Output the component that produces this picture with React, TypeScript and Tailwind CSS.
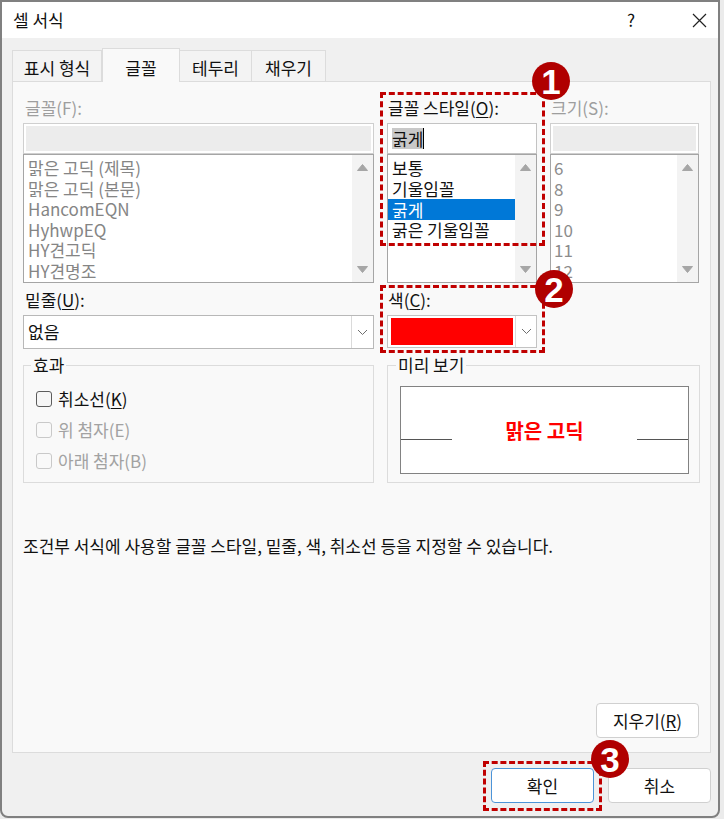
import React from "react";

const fontList = ["맑은 고딕 (제목)", "맑은 고딕 (본문)", "HancomEQN", "HyhwpEQ", "HY견고딕", "HY견명조"];
const styleList = ["보통", "기울임꼴", "굵게", "굵은 기울임꼴"];
const sizeList = ["6", "8", "9", "10", "11", "12"];

function ScrollBar() {
  return (
    <div className="w-[21px] shrink-0 bg-[#f3f3f3] flex flex-col items-center justify-between pt-[9px] pb-[9px]">
      <svg width="11" height="7" viewBox="0 0 11 7">
        <path d="M5.5 0.5L10.5 6.5H0.5z" fill="#a6a6a6" stroke="#a6a6a6" strokeLinejoin="round" />
      </svg>
      <svg width="11" height="7" viewBox="0 0 11 7">
        <path d="M0.5 0.5H10.5L5.5 6.5z" fill="#a6a6a6" stroke="#a6a6a6" strokeLinejoin="round" />
      </svg>
    </div>
  );
}

function Chevron() {
  return (
    <svg width="11" height="7" viewBox="0 0 11 7">
      <path d="M1 1l4.5 4.5L10 1" fill="none" stroke="#6e6e6e" strokeWidth="1" />
    </svg>
  );
}

function Badge({ n, className }: { n: string; className: string }) {
  return (
    <div
      className={
        "absolute w-[38px] h-[38px] rounded-full bg-[#b00000] text-white flex items-center justify-center font-['Liberation_Sans',sans-serif] font-bold text-[35px] leading-none z-30 " +
        className
      }
    >
      {n}
    </div>
  );
}

function CheckRow({ label, disabled }: { label: React.ReactNode; disabled?: boolean }) {
  return (
    <div className="h-[31px] flex items-center gap-[6px]">
      <div
        className={
          disabled
            ? "w-[16px] h-[16px] rounded-[3px] border border-[#c9c9c9] bg-[#f9f9f9]"
            : "w-[16px] h-[16px] rounded-[3px] border border-[#5c5c5c] bg-[#f6f6f6]"
        }
      />
      <span className={disabled ? "text-[#a2a2a2]" : "text-[#111]"}>{label}</span>
    </div>
  );
}

export default function App() {
  return (
    <div className="w-[724px] h-[819px] bg-[#ebebeb] font-['Noto_Sans_CJK_KR',sans-serif] text-[17px] leading-[20px] text-[#111]">
      <div className="relative w-[720px] h-[818px] border-2 border-[#808080] rounded-b-[8px] bg-[#f0f0f0] flex flex-col overflow-hidden">
        {/* title bar */}
        <div className="h-[36px] shrink-0 bg-white flex items-center pl-[11px]">
          <span>셀 서식</span>
          <span className="ml-auto w-[40px] text-center">?</span>
          <div className="ml-[29px] w-[38px] flex justify-center">
            <svg width="15" height="15" viewBox="0 0 15 15">
              <path d="M1 1l13 13M14 1L1 14" stroke="#222" strokeWidth="1.2" />
            </svg>
          </div>
        </div>

        {/* body */}
        <div className="flex-1 flex flex-col pl-[10px] pr-[7px] pt-[10px] pb-[13px]">
          {/* tabs */}
          <div className="flex h-[34px] items-end relative z-10">
            <div className="w-[90px] h-[31px] mb-px bg-[#f3f3f3] border border-b-0 border-[#dcdcdc] flex items-center justify-center pt-[3px]">
              표시 형식
            </div>
            <div className="w-[78px] h-[34px] bg-[#f9f9f9] border border-b-0 border-[#dcdcdc] flex items-center justify-center pt-[4px]">
              글꼴
            </div>
            <div className="w-[72px] h-[31px] mb-px bg-[#f3f3f3] border border-b-0 border-l-0 border-[#dcdcdc] flex items-center justify-center pt-[3px]">
              테두리
            </div>
            <div className="w-[74px] h-[31px] mb-px bg-[#f3f3f3] border border-b-0 border-l-0 border-[#dcdcdc] flex items-center justify-center pt-[3px]">
              채우기
            </div>
          </div>

          {/* panel */}
          <div className="-mt-px flex-1 bg-[#f9f9f9] border border-[#dcdcdc] flex flex-col px-[10px] pt-[16px] pb-[14px]">
            {/* row 1: font / style / size */}
            <div className="flex gap-[13px]">
              <div className="w-[351px]">
                <div className="h-[25px] pl-[2px] text-[#9e9e9e]">글꼴(F):</div>
                <div className="h-[31px] border border-[#cfcfcf] bg-white p-[2px]">
                  <div className="h-full bg-[#ececec]" />
                </div>
                <div className="h-[129px] border border-[#a5a5a5] bg-white flex overflow-hidden">
                  <div className="flex-1 pt-[3px] leading-[20.6px] text-[#858585]">
                    {fontList.map((f) => (
                      <div key={f} className="pl-[4px]">
                        {f}
                      </div>
                    ))}
                  </div>
                  <ScrollBar />
                </div>
              </div>

              <div className="w-[150px]">
                <div className="h-[25px] pl-[1px]">
                  글꼴 스타일(<u className="underline-offset-2">O</u>):
                </div>
                <div className="h-[31px] border border-[#c3c3c3] bg-white flex items-center pl-[4px]">
                  <span className="bg-[#c8c8c8] leading-[21px]">굵게</span>
                  <span className="w-px h-[21px] bg-black" />
                </div>
                <div className="h-[129px] border border-[#a5a5a5] bg-white flex overflow-hidden">
                  <div className="flex-1 pt-[3px] leading-[20.6px]">
                    {styleList.map((s) =>
                      s === "굵게" ? (
                        <div key={s} className="pl-[4px] bg-[#0078d7] text-white h-[21px] leading-[21px]">
                          {s}
                        </div>
                      ) : (
                        <div key={s} className="pl-[4px]">
                          {s}
                        </div>
                      )
                    )}
                  </div>
                  <ScrollBar />
                </div>
              </div>

              <div className="w-[149px]">
                <div className="h-[25px] pl-[1px] text-[#9e9e9e]">크기(S):</div>
                <div className="h-[31px] border border-[#cfcfcf] bg-white p-[2px]">
                  <div className="h-full bg-[#ececec]" />
                </div>
                <div className="h-[129px] border border-[#a5a5a5] bg-white flex overflow-hidden">
                  <div className="flex-1 pt-[3px] leading-[20.6px] text-[#8c8c8c]">
                    {sizeList.map((s) => (
                      <div key={s} className="pl-[3px]">
                        {s}
                      </div>
                    ))}
                  </div>
                  <ScrollBar />
                </div>
              </div>
            </div>

            {/* row 2: underline / colour */}
            <div className="flex gap-[13px] mt-[7px]">
              <div className="w-[351px]">
                <div className="h-[25px] pl-[2px]">
                  밑줄(<u className="underline-offset-2">U</u>):
                </div>
                <div className="h-[34px] border border-[#b8b8b8] bg-white flex">
                  <div className="flex-1 flex items-center pl-[4px]">없음</div>
                  <div className="w-[22px] border-l border-[#dadada] bg-white flex items-center justify-center">
                    <Chevron />
                  </div>
                </div>
              </div>
              <div className="w-[150px]">
                <div className="h-[25px] pl-[1px]">
                  색(<u className="underline-offset-2">C</u>):
                </div>
                <div className="h-[33px] border border-[#c3c3c3] bg-white flex py-[2px] pl-[3px]">
                  <div className="w-[122px] bg-[#ff0000]" />
                  <div className="flex-1 ml-[2px] -my-[2px] border-l border-[#dadada] flex items-center justify-center">
                    <Chevron />
                  </div>
                </div>
              </div>
            </div>

            {/* row 3: effects / preview */}
            <div className="flex gap-[13px] mt-[6px]">
              <fieldset className="w-[351px] h-[128px] border border-[#dcdcdc] pl-[12px]">
                <legend className="ml-[-5px] px-[2px]">효과</legend>
                <div className="pt-[8px]">
                  <CheckRow
                    label={
                      <>
                        취소선(<u className="underline-offset-2">K</u>)
                      </>
                    }
                  />
                  <CheckRow label="위 첨자(E)" disabled />
                  <CheckRow label="아래 첨자(B)" disabled />
                </div>
              </fieldset>

              <fieldset className="flex-1 h-[128px] border border-[#dcdcdc] pl-[12px] pr-[10px]">
                <legend className="ml-[-4px] px-[2px]">미리 보기</legend>
                <div className="mt-[11px] h-[88px] border border-[#828282] bg-white flex items-center">
                  <div className="w-[51px] h-px bg-[#555] mt-[19px]" />
                  <div className="flex-1 text-center font-bold text-[20px] text-[#ff0000] pt-[2px]">맑은 고딕</div>
                  <div className="w-[51px] h-px bg-[#555] mt-[19px]" />
                </div>
              </fieldset>
            </div>

            <div className="mt-[53px]">조건부 서식에 사용할 글꼴 스타일, 밑줄, 색, 취소선 등을 지정할 수 있습니다.</div>

            <div className="flex-1" />
            <div className="self-end mr-px w-[103px] h-[35px] rounded-[4px] border border-[#d0d0d0] bg-white flex items-center justify-center">
              지우기(<u className="underline-offset-2">R</u>)
            </div>
          </div>

          {/* buttons */}
          <div className="flex justify-end gap-[14px] mt-[15px]">
            <div className="w-[103px] h-[35px] rounded-[4px] border border-[#4c94d8] bg-white flex items-center justify-center">
              확인
            </div>
            <div className="w-[103px] h-[35px] rounded-[4px] border border-[#d0d0d0] bg-white flex items-center justify-center">
              취소
            </div>
          </div>
        </div>

        {/* annotations */}
        <div className="absolute left-[378px] top-[90px] w-[165px] h-[154px] border-[3px] border-dashed border-[#c00000] z-20" />
        <div className="absolute left-[378px] top-[283px] w-[165px] h-[68px] border-[3px] border-dashed border-[#c00000] z-20" />
        <div className="absolute left-[481px] top-[759px] w-[119px] h-[50px] border-[3px] border-dashed border-[#c00000] z-20" />
        <Badge n="1" className="left-[530px] top-[60px]" />
        <Badge n="2" className="left-[533px] top-[268px]" />
        <Badge n="3" className="left-[589px] top-[738px]" />
      </div>
    </div>
  );
}
